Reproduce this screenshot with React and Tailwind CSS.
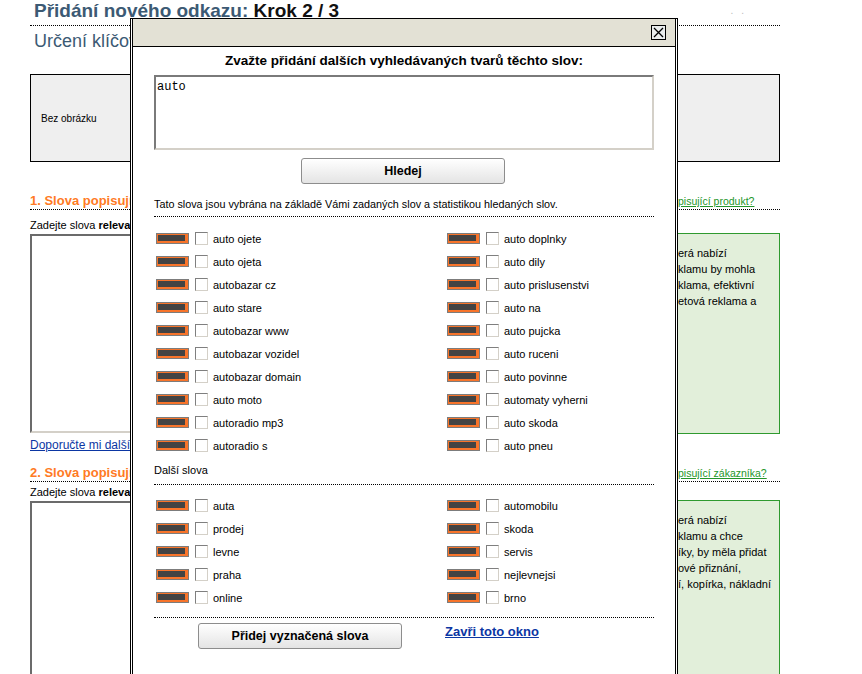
import React from "react";

const left1 = ["auto ojete","auto ojeta","autobazar cz","auto stare","autobazar www","autobazar vozidel","autobazar domain","auto moto","autoradio mp3","autoradio s"];
const right1 = ["auto doplnky","auto dily","auto prislusenstvi","auto na","auto pujcka","auto ruceni","auto povinne","automaty vyherni","auto skoda","auto pneu"];
const left2 = ["auta","prodej","levne","praha","online"];
const right2 = ["automobilu","skoda","servis","nejlevnejsi","brno"];

function Bar() {
  return (
    <div className="w-[33px] h-[11px] border border-[#7c7c7c] bg-[#f8742a] shrink-0">
      <div className="ml-px mt-px h-[6px] w-[27px] bg-[#434343]" />
    </div>
  );
}

function Check() {
  return (
    <div className="w-[13px] h-[13px] shrink-0 bg-white border border-t-[#7f7f7f] border-l-[#7f7f7f] border-r-[#d4d0c8] border-b-[#d4d0c8]" />
  );
}

function Row({ label }) {
  return (
    <div className="h-[23px] flex items-center">
      <Bar />
      <div className="ml-[6px]"><Check /></div>
      <span className="ml-[5px] text-[11px] leading-[14px] text-black">{label}</span>
    </div>
  );
}

function Grid({ left, right }) {
  const items = [];
  left.forEach((l, i) => {
    items.push(<Row key={"l" + i} label={l} />);
    items.push(<Row key={"r" + i} label={right[i]} />);
  });
  return <div className="grid grid-cols-[291px_1fr] pl-[2px]">{items}</div>;
}

function Dotted({ className = "" }) {
  return <div className={"border-t border-dotted border-black " + className} />;
}

function GreenBox({ lines, className = "" }) {
  return (
    <div className={"border border-[#2f9a2f] bg-[#e2efda] pt-[11px] pl-[97px] " + className}>
      {lines.map((t, i) => (
        <div key={i} className="text-[11px] leading-[16px] whitespace-nowrap text-black">{t}</div>
      ))}
    </div>
  );
}

function FakeArea({ className = "" }) {
  return (
    <div className={"bg-white border-2 border-t-[#6b6b6b] border-l-[#6b6b6b] border-r-[#d4d0c8] border-b-[#d4d0c8] " + className} />
  );
}

export default function App() {
  return (
    <div
      className="relative w-[862px] h-[674px] overflow-hidden bg-white text-black"
      style={{ fontFamily: '"Liberation Sans", Arial, sans-serif' }}
    >
      {/* Background page */}
      <div className="ml-[30px] w-[750px]">
        <div className="h-[26px] border-b border-dotted border-black flex justify-between">
          <h1 className="pl-[4px] text-[19px] leading-[22px] font-bold text-[#3c5a74] whitespace-nowrap">
            Přidání nového odkazu: <span className="text-[#111]">Krok 2 / 3</span>
          </h1>
          <span className="mr-[28px] mt-[6px] text-[10px] leading-[10px] text-[#bbb] tracking-[8px]">..</span>
        </div>
        <div className="mt-[4px] pl-[4px] text-[18px] leading-[22px] text-[#3c5a74]">Určení klíčových slov</div>
        <div className="mt-[22px] h-[88px] border border-black bg-[#efefef] flex items-center pl-[10px] text-[10px]">
          Bez obrázku
        </div>

        <div className="mt-[31px] h-[17px] border-b border-dotted border-black flex justify-between items-start">
          <span className="text-[13px] leading-[16px] font-bold text-[#ff7a24]">1. Slova popisující produkt</span>
          <span className="w-[102px] text-[10.5px] leading-[16px] text-[#23962a] underline whitespace-nowrap">pisující produkt?</span>
        </div>
        <div className="mt-[8px] text-[11px] leading-[14px]">Zadejte slova <b>relevantní</b> pro váš produkt</div>
        <div className="mt-[1px] grid grid-cols-[520px_30px_200px]">
          <FakeArea className="mt-px h-[199px]" />
          <div />
          <GreenBox className="h-[201px]" lines={["erá nabízí", "klamu by mohla", "klama, efektivní", "etová reklama a"]} />
        </div>
        <div className="mt-[4px] text-[12px] leading-[14px] text-[#0b36a3] underline">Doporučte mi další slova</div>

        <div className="mt-[13px] h-[17px] border-b border-dotted border-black flex justify-between items-start">
          <span className="text-[13px] leading-[16px] font-bold text-[#ff7a24]">2. Slova popisující zákazníka</span>
          <span className="w-[102px] text-[10.5px] leading-[16px] text-[#23962a] underline whitespace-nowrap">pisující zákazníka?</span>
        </div>
        <div className="mt-[3px] text-[11px] leading-[14px]">Zadejte slova <b>relevantní</b> pro vašeho zákazníka</div>
        <div className="mt-[1px] grid grid-cols-[520px_30px_200px]">
          <FakeArea className="mt-px h-[199px]" />
          <div />
          <GreenBox className="h-[200px]" lines={["erá nabízí", "klamu a chce", "íky, by měla přidat", "ové přiznání,", "í, kopírka, nákladní"]} />
        </div>
      </div>

      {/* Modal */}
      <div className="absolute left-[130px] top-[18px] w-[548px] h-[700px] border border-black bg-white px-px">
        <div className="h-full border-x border-black bg-white">
          <div className="h-[28px] bg-[#e3e1d5] border-b border-black flex justify-end items-start">
            <div className="mt-[6px] mr-[9px] w-[15px] h-[15px] border border-black bg-[#eaeded] flex items-center justify-center">
              <svg width="11" height="11" viewBox="0 0 11 11">
                <path d="M1 1 L10 10 M10 1 L1 10" stroke="#000" strokeWidth="1.3" fill="none" />
              </svg>
            </div>
          </div>
          <div className="w-[500px] mx-auto">
            <div className="mt-[6px] text-center text-[13.5px] leading-[16px] font-bold whitespace-nowrap">
              Zvažte přidání dalších vyhledávaných tvarů těchto slov:
            </div>
            <div className="mt-[6px] h-[75px] bg-white border-2 border-t-[#7a7a7a] border-l-[#7a7a7a] border-r-[#d4d0c8] border-b-[#d4d0c8] pl-px pt-[2px] text-[12px] leading-[14px]">
              <span style={{ fontFamily: '"Liberation Mono", "Courier New", monospace' }}>auto</span>
            </div>
            <div className="mt-[8px] flex justify-center">
              <button className="w-[204px] h-[26px] rounded-[3px] border border-[#8d8d8d] bg-linear-to-b from-white to-[#e4e4e4] text-[12.5px] font-bold ml-[-2px]">
                Hledej
              </button>
            </div>
            <div className="mt-[13px] text-[10.8px] leading-[14px] whitespace-nowrap">
              Tato slova jsou vybrána na základě Vámi zadaných slov a statistikou hledaných slov.
            </div>
            <Dotted className="mt-[5px]" />
            <div className="mt-[10px]">
              <Grid left={left1} right={right1} />
            </div>
            <div className="mt-[6px] text-[11px] leading-[14px]">Další slova</div>
            <Dotted className="mt-[7px]" />
            <div className="mt-[9px]">
              <Grid left={left2} right={right2} />
            </div>
            <Dotted className="mt-[8px]" />
            <div className="mt-[5px] flex items-start">
              <button className="ml-[44px] w-[204px] h-[26px] rounded-[3px] border border-[#8d8d8d] bg-linear-to-b from-white to-[#e4e4e4] text-[12.5px] font-bold">
                Přidej vyznačená slova
              </button>
              <a href="#" className="ml-[43px] mt-[1px] text-[13px] leading-[16px] font-bold text-[#0b36a3] underline">
                Zavři toto okno
              </a>
            </div>
          </div>
        </div>
      </div>
    </div>
  );
}
